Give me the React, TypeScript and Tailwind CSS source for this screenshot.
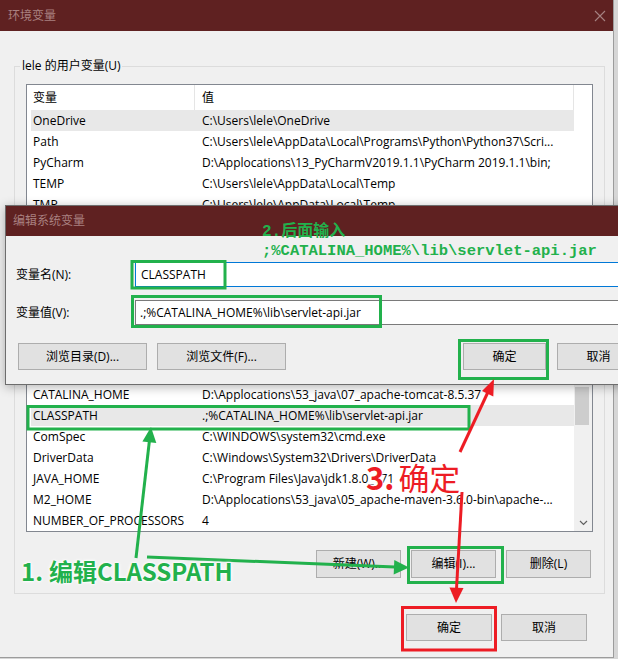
import React from "react";

type Row = { n: string; v: string; sel?: boolean; hidden?: boolean };

const topRows: Row[] = [
  { n: "OneDrive", v: "C:\\Users\\lele\\OneDrive", sel: true },
  { n: "Path", v: "C:\\Users\\lele\\AppData\\Local\\Programs\\Python\\Python37\\Scri..." },
  { n: "PyCharm", v: "D:\\Applocations\\13_PyCharmV2019.1.1\\PyCharm 2019.1.1\\bin;" },
  { n: "TEMP", v: "C:\\Users\\lele\\AppData\\Local\\Temp" },
  { n: "TMP", v: "C:\\Users\\lele\\AppData\\Local\\Temp" },
];

const sysRows: Row[] = [
  { n: "asl.log", v: "Destination=file", hidden: true },
  { n: "CATALINA_HOME", v: "D:\\Applocations\\53_java\\07_apache-tomcat-8.5.37" },
  { n: "CLASSPATH", v: ".;%CATALINA_HOME%\\lib\\servlet-api.jar", sel: true },
  { n: "ComSpec", v: "C:\\WINDOWS\\system32\\cmd.exe" },
  { n: "DriverData", v: "C:\\Windows\\System32\\Drivers\\DriverData" },
  { n: "JAVA_HOME", v: "C:\\Program Files\\Java\\jdk1.8.0_171" },
  { n: "M2_HOME", v: "D:\\Applocations\\53_java\\05_apache-maven-3.6.0-bin\\apache-..." },
  { n: "NUMBER_OF_PROCESSORS", v: "4" },
];

function ListRow({ r }: { r: Row }) {
  return (
    <div
      className={
        r.hidden
          ? "invisible ml-[4px] flex h-[21px] shrink-0 items-center"
          : r.sel
          ? "ml-[4px] flex h-[21px] shrink-0 items-center bg-[#e8e8e8]"
          : "ml-[4px] flex h-[21px] shrink-0 items-center"
      }
    >
      <div className="w-[164px] shrink-0 overflow-hidden whitespace-nowrap pl-[2px]">{r.n}</div>
      <div className="flex-1 overflow-hidden whitespace-nowrap pl-[7px]">{r.v}</div>
    </div>
  );
}

function Header({ covered }: { covered?: boolean }) {
  return (
    <div className="flex h-[25px] shrink-0 items-center bg-white">
      <div className="flex h-full w-[168px] shrink-0 items-center border-r border-[#e5e5e5] pl-[6px]">
        <span className={covered ? "invisible" : ""}>变量</span>
      </div>
      <div className="flex h-full flex-1 items-center border-r border-[#e5e5e5] pl-[7px]">
        <span className={covered ? "invisible" : ""}>值</span>
      </div>
    </div>
  );
}

function Btn({ label, className }: { label: string; className: string }) {
  return (
    <div
      className={
        "flex shrink-0 items-center justify-center border border-[#adadad] bg-[#e1e1e1] text-[12px] text-black " +
        className
      }
    >
      {label}
    </div>
  );
}

export default function App() {
  return (
    <div className="relative h-[659px] w-[618px] overflow-hidden bg-[#d6d6d6] font-['Open_Sans','Noto_Sans_CJK_SC',sans-serif] text-[12px] text-black">
      {/* main window */}
      <div className="flex h-[658px] w-[614px] flex-col border-r border-b border-[#9c9c9c] bg-[#f0f0f0]">
        <div className="flex h-[31px] shrink-0 items-center justify-between bg-[#5f2121] pl-[8px] pr-[7px]">
          <span className="text-[12px] text-[#a98080]">环境变量</span>
          <svg width="12" height="12" viewBox="0 0 12 12">
            <path d="M1 1 L11 11 M11 1 L1 11" stroke="#a58282" strokeWidth="1.1" fill="none" />
          </svg>
        </div>

        <div className="flex flex-col pl-[14px]">
          {/* user variables */}
          <fieldset className="mt-[27px] w-[591px] border border-[#dcdcdc] pb-[14px]">
            <legend className="ml-[5px] px-[2px] text-[12px] leading-[16px]">lele 的用户变量(U)</legend>
            <div className="ml-[11px] mt-[10px] flex h-[160px] w-[567px] overflow-hidden border border-[#828790] bg-white">
              <div className="flex w-[547px] flex-col">
                <Header />
                {topRows.map((r) => (
                  <ListRow key={r.n} r={r} />
                ))}
              </div>
              <div className="w-[18px] bg-white" />
            </div>
            <div className="invisible mr-[13px] mt-[10px] flex justify-end gap-[10px]">
              <Btn label="新建(N)..." className="h-[27px] w-[85px]" />
              <Btn label="编辑(E)..." className="h-[27px] w-[85px]" />
              <Btn label="删除(D)" className="h-[27px] w-[85px]" />
            </div>
          </fieldset>

          {/* system variables */}
          <fieldset className="mt-[8px] w-[591px] border border-[#dcdcdc] pb-[15px]">
            <legend className="invisible ml-[5px] px-[2px] text-[12px] leading-[16px]">系统变量(S)</legend>
            <div className="ml-[11px] mt-[17px] flex h-[195px] w-[567px] overflow-hidden border border-[#828790] bg-white">
              <div className="flex w-[547px] flex-col">
                <Header covered />
                {sysRows.map((r) => (
                  <ListRow key={r.n} r={r} />
                ))}
              </div>
              <div className="flex w-[18px] flex-col bg-[#f0f0f0]">
                <div className="ml-[1px] mt-[49px] h-[38px] w-[14px] bg-[#cdcdcd]" />
                <div className="mb-[5px] mt-auto flex justify-center">
                  <svg width="9" height="6" viewBox="0 0 9 6">
                    <path d="M1 1 L4.5 4.5 L8 1" stroke="#606060" strokeWidth="1.2" fill="none" />
                  </svg>
                </div>
              </div>
            </div>
            <div className="mr-[13px] mt-[18px] flex justify-end gap-[10px]">
              <Btn label="新建(W)..." className="h-[28px] w-[85px]" />
              <Btn label="编辑(I)..." className="h-[28px] w-[85px]" />
              <Btn label="删除(L)" className="h-[28px] w-[85px]" />
            </div>
          </fieldset>

          <div className="mt-[20px] flex w-[591px] justify-end gap-[9px] pr-[18px]">
            <Btn label="确定" className="h-[27px] w-[86px]" />
            <Btn label="取消" className="h-[27px] w-[86px]" />
          </div>
        </div>
      </div>

      {/* edit dialog overlay */}
      <div className="absolute left-[5px] top-[205px] flex h-[180px] w-[640px] flex-col border border-[#6d6d6d] bg-[#f0f0f0] shadow-[0_2px_10px_rgba(0,0,0,0.3)]">
        <div className="flex h-[30px] shrink-0 items-center bg-[#5f2121] pl-[7px] text-[12px] text-[#a98080]">
          编辑系统变量
        </div>
        <div className="flex flex-col pl-[10px] pt-[26px]">
          <div className="flex h-[25px] items-center">
            <div className="w-[119px] shrink-0">变量名(N):</div>
            <div className="flex h-full flex-1 items-center border border-[#0078d7] bg-white pl-[5px]">CLASSPATH</div>
          </div>
          <div className="mt-[13px] flex h-[25px] items-center">
            <div className="w-[119px] shrink-0">变量值(V):</div>
            <div className="flex h-full flex-1 items-center border border-[#7a7a7a] bg-white pl-[4px]">
              .;%CATALINA_HOME%\lib\servlet-api.jar
            </div>
          </div>
          <div className="ml-[2px] mt-[18px] flex">
            <Btn label="浏览目录(D)..." className="h-[27px] w-[129px]" />
            <Btn label="浏览文件(F)..." className="ml-[10px] h-[27px] w-[129px]" />
            <Btn label="确定" className="ml-[177px] h-[27px] w-[83px]" />
            <Btn label="取消" className="ml-[11px] h-[27px] w-[83px]" />
          </div>
        </div>
      </div>

      {/* annotations */}
      <div className="absolute left-[262px] top-[223px] font-['Liberation_Mono','Noto_Sans_CJK_SC',monospace] text-[16px] font-bold leading-[18px] text-[#22b14c]">
        2.后面输入
      </div>
      <div className="absolute left-[262px] top-[242px] whitespace-nowrap font-['Liberation_Mono',monospace] text-[15.5px] font-bold leading-[18px] text-[#22b14c]">
        ;%CATALINA_HOME%\lib\servlet-api.jar
      </div>

      <svg className="pointer-events-none absolute left-0 top-0" width="618" height="659" viewBox="0 0 618 659">
        <g fill="none" stroke="#22b14c" strokeWidth="3">
          <rect x="132" y="261.5" width="93" height="26.5" />
          <rect x="132.5" y="296.5" width="248" height="30" />
          <rect x="459.5" y="340.5" width="88" height="38" />
          <rect x="28" y="406.5" width="441" height="22.5" />
          <rect x="408.5" y="547.5" width="94" height="35" />
        </g>
        <rect x="402.5" y="607.5" width="93" height="42.5" fill="none" stroke="#ed1c24" strokeWidth="3" />
        {/* green arrows */}
        <line x1="136" y1="558" x2="149.5" y2="440" stroke="#22b14c" strokeWidth="3" />
        <polygon points="151,427 156.3,443 142.4,441.4" fill="#22b14c" />
        <line x1="147" y1="557" x2="395" y2="567" stroke="#22b14c" strokeWidth="3" />
        <polygon points="409,567.5 393.7,574.5 394.3,560" fill="#22b14c" />
        {/* red arrows */}
        <line x1="460" y1="452" x2="488" y2="392" stroke="#ed1c24" strokeWidth="3" />
        <polygon points="494,379 493.3,396.5 482,391" fill="#ed1c24" />
        <line x1="462" y1="492" x2="456.5" y2="589" stroke="#ed1c24" strokeWidth="3" />
        <polygon points="456,603 449.5,587.5 463.5,588" fill="#ed1c24" />
      </svg>

      <div className="absolute left-[366px] top-[461px] whitespace-nowrap font-['Noto_Sans_CJK_SC',sans-serif] text-[31px] leading-[32px] text-[#ed1c24] [text-shadow:0_0_2px_#fff,0_0_3px_#fff,0_0_4px_#fff]">
        <span className="mr-[4px] font-bold">3.</span>确定
      </div>
      <div className="absolute left-[21px] top-[558px] whitespace-nowrap font-['Noto_Sans_CJK_SC',sans-serif] text-[24px] font-bold leading-[26px] text-[#22b14c] [text-shadow:0_0_2px_#fff,0_0_3px_#fff,0_0_4px_#fff]">
        <span className="mr-[6px]">1.</span>编辑CLASSPATH
      </div>
    </div>
  );
}
